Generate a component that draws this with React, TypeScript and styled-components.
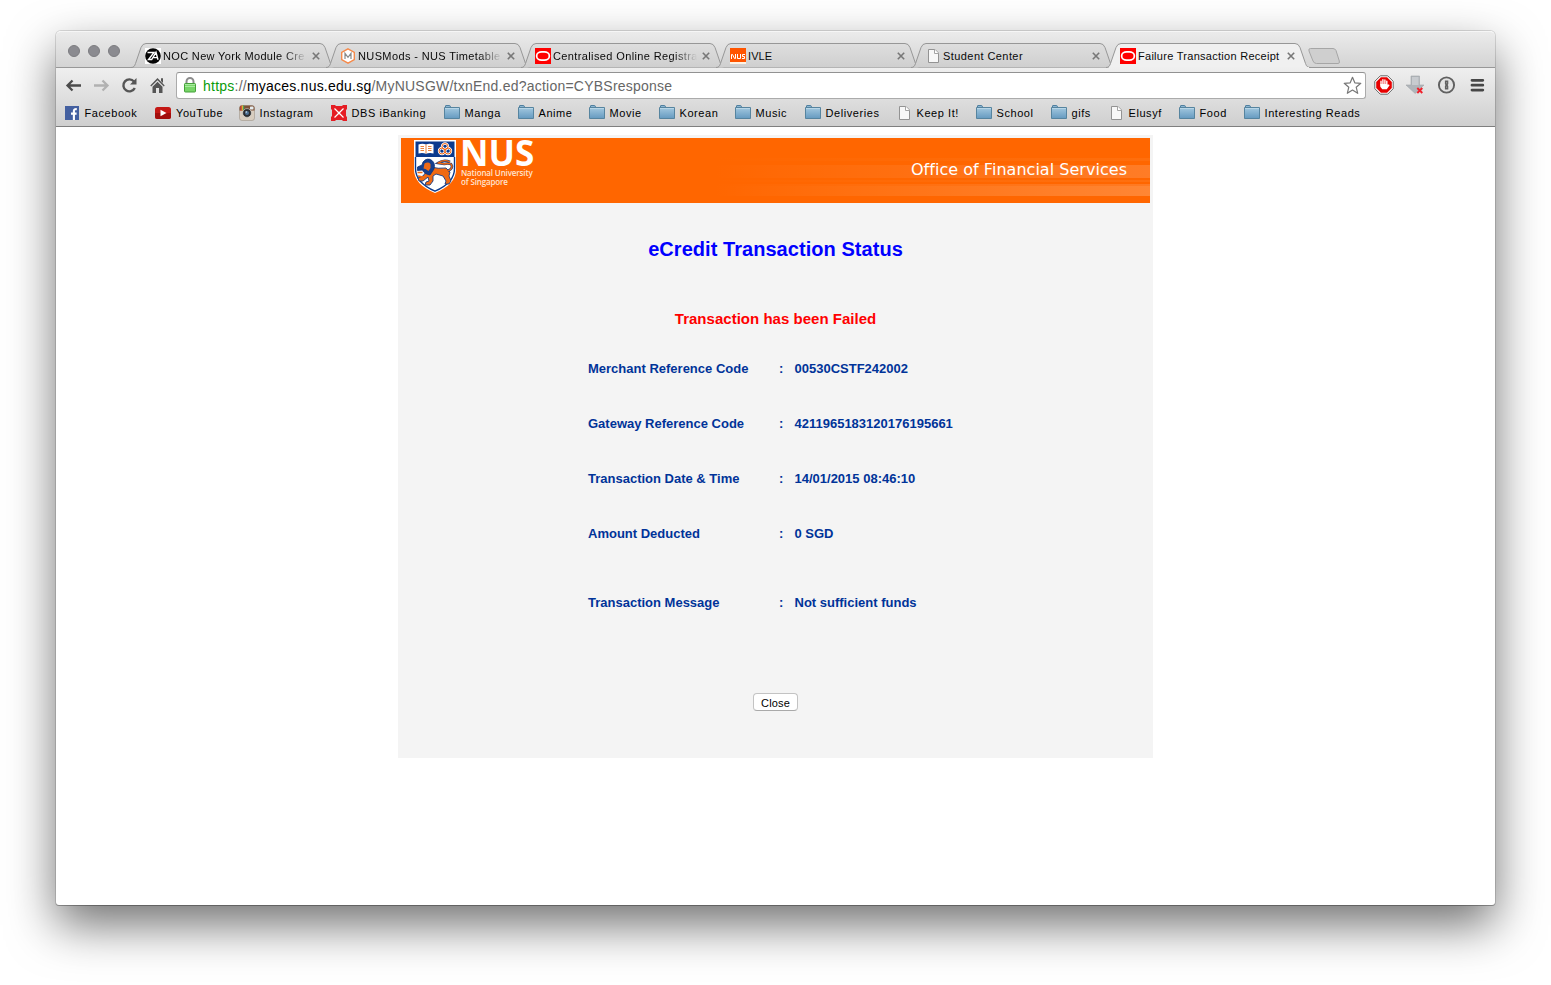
import React from "react";
import styled, { createGlobalStyle } from "styled-components";

const GlobalStyle = createGlobalStyle`
  * { box-sizing: border-box; }
  body { margin: 0; background: #fff; overflow: hidden; }
`;

const chromeFont = `"Liberation Sans", Arial, sans-serif`;

const Desktop = styled.div`
  width: 1551px;
  height: 985px;
  padding: 31px 0 0 56px;
  overflow: hidden;
  background: #fff;
`;

const BrowserWindow = styled.div`
  width: 1439px;
  height: 874px;
  display: flex;
  flex-direction: column;
  background: #fff;
  border-radius: 5px 5px 3px 3px;
  box-shadow: 0 0 0 1px rgba(0, 0, 0, 0.13), 0 1px 0 rgba(0, 0, 0, 0.2), 0 20px 48px rgba(0, 0, 0, 0.56);
  font-family: ${chromeFont};
`;

const TabStrip = styled.div`
  height: 37px;
  flex: none;
  display: flex;
  align-items: flex-end;
  border-radius: 5px 5px 0 0;
  border-top: 1px solid #f6f6f6;
  background: linear-gradient(#ebebeb, #d3d3d3);
  box-shadow: inset 0 -1px 0 #989898;
`;

const TrafficLights = styled.div`
  width: 75px;
  height: 36px;
  padding: 2px 0 0 12px;
  display: flex;
  align-items: center;
  gap: 8px;
`;

const Light = styled.span`
  width: 12px;
  height: 12px;
  border-radius: 50%;
  background: #8b8b90;
  border: 1px solid #7c7c80;
`;

const TabBox = styled.div`
  position: relative;
  width: 206px;
  height: 25px;
  margin-right: -11px;
  padding: 1px 0 0 14px;
  display: flex;
  align-items: center;
  flex: none;
`;

const TabShape = styled.svg`
  position: absolute;
  left: 0;
  top: 0;
`;

const Favicon = styled.svg`
  position: relative;
  flex: none;
`;

const TabTitle = styled.span<{ $spacing: number; $fade: boolean }>`
  position: relative;
  width: 144px;
  margin-left: 2px;
  overflow: hidden;
  white-space: nowrap;
  font-size: 11px;
  line-height: 16px;
  letter-spacing: ${(p) => p.$spacing}px;
  color: #0a0a0a;
  ${(p) => p.$fade && "mask-image: linear-gradient(90deg, #000 84%, transparent 100%);"}
`;

const CloseMark = styled.svg`
  position: relative;
  margin-left: 5px;
  flex: none;
`;

const NewTab = styled.svg`
  margin: 0 0 3px 6px;
  flex: none;
`;

const ToolArea = styled.div`
  height: 59px;
  flex: none;
  background: linear-gradient(#efefef, #cfcfcf);
  border-bottom: 1px solid #7f7f7f;
`;

const NavRow = styled.div`
  height: 34px;
  display: flex;
  align-items: center;
  padding: 0 0 0 7px;
`;

const NavIcon = styled.svg`
  width: 20px;
  height: 20px;
  margin-right: 8px;
  flex: none;
`;

const AddressBar = styled.div`
  width: 1190px;
  height: 27px;
  margin-left: 1px;
  display: flex;
  align-items: center;
  border: 1px solid #ababab;
  border-top-color: #929292;
  border-radius: 3px;
  background: #fff;
  padding: 0 3px 0 6px;
  flex: none;
`;

const Url = styled.div`
  flex: 1;
  margin-left: 6px;
  padding-top: 2px;
  font-size: 14px;
  line-height: 18px;
  letter-spacing: 0.23px;
  color: #666;
`;

const Secure = styled.span`
  color: #0a9b0a;
`;
const Host = styled.span`
  color: #000;
`;

const Extensions = styled.div`
  display: flex;
  align-items: center;
  gap: 11px;
  margin-left: 8px;
`;

const BookmarkBar = styled.div`
  height: 22px;
  display: flex;
  align-items: center;
  padding-left: 9px;
`;

const BookmarkItem = styled.div<{ $width: number }>`
  width: ${(p) => p.$width}px;
  flex: none;
  display: flex;
  align-items: center;
`;

const BookmarkLabel = styled.span<{ $gap: number }>`
  margin-left: ${(p) => p.$gap}px;
  font-size: 11px;
  line-height: 15px;
  letter-spacing: 0.57px;
  white-space: nowrap;
  color: #000;
`;

const Page = styled.main`
  flex: 1;
  display: flex;
  justify-content: center;
  align-items: flex-start;
  padding-top: 8px;
`;

const Receipt = styled.section`
  width: 755px;
  height: 623px;
  padding: 3px;
  background: #f4f4f4;
  display: flex;
  flex-direction: column;
  align-items: center;
`;

const Banner = styled.header`
  width: 749px;
  height: 65px;
  flex: none;
  display: flex;
  justify-content: space-between;
  background: linear-gradient(90deg, #f60 42%, rgba(255, 102, 0, 0) 100%),
    linear-gradient(#f60 0 20px, #ff6e0c 20px 23px, #f60 23px 27px, #ff7c26 27px 40px, #f60 40px 42px, #ff700f 42px 44px, #f60 44px 46px, #ff7a22 46px 48px, #ff8634 48px 58px, #f60 58px);
`;

const Brand = styled.div`
  display: flex;
  padding: 2px 0 0 12px;
`;

const BrandText = styled.div`
  margin-left: 3px;
  color: #fff;
  font-family: "Open Sans", "Noto Sans", sans-serif;
`;

const BrandName = styled.div`
  height: 28px;
  font-size: 35px;
  line-height: 26px;
  font-weight: 700;
`;

const BrandLine = styled.div`
  padding-left: 1px;
  font-size: 8px;
  line-height: 9px;
  letter-spacing: -0.15px;
  font-weight: 600;
  white-space: nowrap;
  color: #ffe3cf;
`;

const Department = styled.div`
  padding: 22px 23px 0 0;
  font: 16px/20px "DejaVu Sans", Verdana, sans-serif;
  letter-spacing: 0.03px;
  color: #fff;
  white-space: nowrap;
`;

const Title = styled.h1`
  margin: 34px 0 0;
  font-size: 20px;
  line-height: 24px;
  letter-spacing: 0.05px;
  color: #00f;
`;

const Failure = styled.p`
  margin: 48px 0 0;
  font-size: 15px;
  line-height: 20px;
  font-weight: 700;
  letter-spacing: 0.02px;
  color: #f00;
`;

const Details = styled.dl`
  width: 375px;
  margin: 12px 0 0;
  display: grid;
  grid-template-columns: 191px 15.5px 1fr;
  grid-template-rows: repeat(4, 55px) 83px;
  align-items: center;
  font-size: 13px;
  line-height: 16px;
  font-weight: 700;
  color: #039;
`;

const Term = styled.dt``;
const Value = styled.dd`
  margin: 0;
  white-space: nowrap;
`;

const CloseButton = styled.button`
  width: 45px;
  height: 18px;
  margin-top: 49px;
  padding: 2px 0 0;
  border: 1px solid #c3c3c3;
  border-bottom-color: #a9a9a9;
  border-radius: 4px;
  background: #fff;
  font: 11px/14px ${chromeFont};
  letter-spacing: 0.15px;
  color: #000;
`;

type IconKind = "noc" | "mods" | "oval" | "nus" | "page" | "folder" | "facebook" | "youtube" | "instagram" | "dbs";

const SiteIcon = ({ kind }: { kind: IconKind }) => (
  <Favicon width="16" height="16" viewBox="0 0 16 16">
    {kind === "noc" && (
      <>
        <rect width="16" height="16" fill="#fff" />
        <circle cx="8" cy="8" r="7.8" fill="#050505" />
        <path d="M2.500 4.500H9L3.500 11.500h3.200L11 4.300l2 7.500M8.600 9.600h3.200" fill="none" stroke="#fff" strokeWidth="1.400" />
      </>
    )}
    {kind === "mods" && (
      <>
        <path d="M8 .8 14.3 4.4v7.2L8 15.2 1.7 11.6V4.4z" fill="#fff" stroke="#f58a4b" strokeWidth="1.4" />
        <path d="M5 11V5.3l3 4 3-4V11" fill="none" stroke="#888" strokeWidth="1.2" />
      </>
    )}
    {kind === "oval" && (
      <>
        <rect width="16" height="16" fill="#f00" />
        <rect x="1.700" y="3.800" width="12.600" height="8.400" rx="5" ry="3.600" fill="#f00" stroke="#fff" strokeWidth="1.700" />
      </>
    )}
    {kind === "nus" && (
      <>
        <rect width="16" height="16" fill="#fff3e4" />
        <rect width="16" height="14" fill="#ff5500" />
        <path d="M1.500 11V6.500h1l2 4h1V6M7.500 6v4.500h3V6M15 6.500h-2.500v2h2v2H12" fill="none" stroke="#fff" />
      </>
    )}
    {kind === "page" && (
      <>
        <path d="M3.500 1.500h6.500l3.500 3.500v9.500h-10z" fill="#f8f8f8" stroke="#939393" />
        <path d="M9.500 1.500v4h4" fill="#fff" stroke="#a5a5a5" />
      </>
    )}
    {kind === "folder" && (
      <>
        <defs>
          <linearGradient id="folderFill" x1="0" y1="0" x2="0" y2="1">
            <stop offset="0" stopColor="#a3c8df" />
            <stop offset="1" stopColor="#659ac0" />
          </linearGradient>
        </defs>
        <path d="M1.500 3V1Q1.500.5 2 .5H5.500Q6 .5 6.300 1V3" fill="#8db7d3" stroke="#4f7f9f" />
        <path d="M.5 2.500h15v11H.5z" fill="url(#folderFill)" stroke="#56849f" />
        <path d="M1 3.500h14" stroke="#b8d6e8" />
      </>
    )}
    {kind === "facebook" && (
      <>
        <path d="M0 1h14v14H0z" fill="#4460a0" />
        <path d="M8.900 15V5.800q0-1.900 2.900-1.600M6 8.600h5.600" fill="none" stroke="#fff" strokeWidth="2.100" />
      </>
    )}
    {kind === "youtube" && (
      <>
        <rect y="2" width="16" height="12" rx="2.500" fill="#c41815" />
        <path d="M0 8h16v3.500a2.500 2.500 0 0 1-2.500 2.500h-11A2.500 2.500 0 0 1 0 11.500z" fill="#a30e0d" />
        <path d="M5.500 4.800 11.500 8l-6 3.200z" fill="#fff" />
      </>
    )}
    {kind === "instagram" && (
      <>
        <rect x=".5" y=".5" width="15" height="15" rx="2.500" fill="#d8cdbf" stroke="#a0958a" strokeWidth=".6" />
        <path d="M.5 5.500V3A2.500 2.500 0 0 1 3 .5h10A2.500 2.500 0 0 1 15.500 3v2.500z" fill="#7d5138" />
        <path d="M2 .7v5" stroke="#d83b34" strokeWidth="1.200" />
        <path d="M3.300.5v5" stroke="#e5bd38" strokeWidth="1.200" />
        <path d="M4.600.5v5" stroke="#519d59" strokeWidth="1.200" />
        <rect x="11" y="1.500" width="3.500" height="3" rx=".6" fill="#e5edf0" />
        <circle cx="8" cy="8" r="4.400" fill="#2c2e31" stroke="#e6e2dc" strokeWidth=".6" />
        <circle cx="8" cy="8" r="2" fill="#507398" />
        <circle cx="7.300" cy="7" r=".8" fill="#d5e5f1" />
      </>
    )}
    {kind === "dbs" && (
      <>
        <path d="M0 0h4l1 1h6l1-1h4v4l-1 1v6l1 1v4h-4l-1-1H5l-1 1H0v-4l1-1V5L0 4z" fill="#e51c23" />
        <path d="M3.500 3.500l9 9M12.500 3.500l-9 9" stroke="#fff" strokeWidth="1.200" />
        <circle cx="8" cy="8" r="1.200" fill="#fff" />
      </>
    )}
  </Favicon>
);

const tabs: { title: string; icon: IconKind; spacing: number; fade?: boolean }[] = [
  { title: "NOC New York Module Cre", icon: "noc", spacing: 0.34, fade: true },
  { title: "NUSMods - NUS Timetable", icon: "mods", spacing: 0.38, fade: true },
  { title: "Centralised Online Registra", icon: "oval", spacing: 0.38, fade: true },
  { title: "IVLE", icon: "nus", spacing: 0.1 },
  { title: "Student Center", icon: "page", spacing: 0.43 },
  { title: "Failure Transaction Receipt", icon: "oval", spacing: 0.28 },
];

const Tab = ({ title, icon, spacing, fade, active }: (typeof tabs)[number] & { active: boolean }) => (
  <TabBox>
    <TabShape width="206" height="25" viewBox="0 0 206 25">
      <defs>
        <linearGradient id="tabFill" x1="0" y1="0" x2="0" y2="1">
          <stop offset="0" stopColor="#dedede" />
          <stop offset="1" stopColor="#cfcfcf" />
        </linearGradient>
      </defs>
      <path
        d="M0 24.500C3 24.500 3.500 23 4.500 20.500L10 4.500Q11.500.5 15 .5H189Q192.500.5 194 4.500L199.500 20.500C200.500 23 201 24.500 205 24.500"
        fill={active ? "#f0f0f0" : "url(#tabFill)"}
        stroke="#979797"
      />
      {active && <path d="M3 24.500h200" stroke="#efefef" />}
    </TabShape>
    <SiteIcon kind={icon} />
    <TabTitle $spacing={spacing} $fade={!!fade}>
      {title}
    </TabTitle>
    <CloseMark width="8" height="8" viewBox="0 0 8 8">
      <path d="M.8.8l6.400 6.400M7.200.8.8 7.200" stroke="#777" strokeWidth="1.600" />
    </CloseMark>
  </TabBox>
);

const bookmarks: { label: string; icon: IconKind; width: number; gap: number }[] = [
  { label: "Facebook", icon: "facebook", width: 90, gap: 3.5 },
  { label: "YouTube", icon: "youtube", width: 84, gap: 5 },
  { label: "Instagram", icon: "instagram", width: 92, gap: 4.5 },
  { label: "DBS iBanking", icon: "dbs", width: 113, gap: 4.5 },
  { label: "Manga", icon: "folder", width: 74, gap: 4.5 },
  { label: "Anime", icon: "folder", width: 71, gap: 4.5 },
  { label: "Movie", icon: "folder", width: 70, gap: 4.5 },
  { label: "Korean", icon: "folder", width: 76, gap: 4.5 },
  { label: "Music", icon: "folder", width: 70, gap: 4.5 },
  { label: "Deliveries", icon: "folder", width: 91, gap: 4.5 },
  { label: "Keep It!", icon: "page", width: 80, gap: 4.5 },
  { label: "School", icon: "folder", width: 75, gap: 4.5 },
  { label: "gifs", icon: "folder", width: 57, gap: 4.5 },
  { label: "Elusyf", icon: "page", width: 71, gap: 4.5 },
  { label: "Food", icon: "folder", width: 65, gap: 4.5 },
  { label: "Interesting Reads", icon: "folder", width: 130, gap: 4.5 },
];

const details = [
  ["Merchant Reference Code", "00530CSTF242002"],
  ["Gateway Reference Code", "4211965183120176195661"],
  ["Transaction Date & Time", "14/01/2015 08:46:10"],
  ["Amount Deducted", "0 SGD"],
  ["Transaction Message", "Not sufficient funds"],
];

const Crest = () => (
  <svg width="44" height="53" viewBox="0 0 44 53">
    <path d="M1 0h42v29c0 11-7 18-21 24C8 47 1 40 1 29z" fill="#fff" />
    <path d="M2.500 1.500h39v15.500h-39z" fill="#0b3a8d" />
    <path d="M2.500 17v11.500C2.500 38.500 9 45.500 22 51.200 35 45.500 41.500 38.500 41.500 28.500V17" fill="none" stroke="#0b3a8d" strokeWidth="1.400" />
    <path d="M5.500 4.500Q9.500 3.200 13 4.500 16.500 3.200 20.500 4.500V13.500Q16.500 12.200 13 13.800 9.500 12.200 5.500 13.500z" fill="#fff" />
    <path d="M13 4.500V13.500M7.500 6.500h3.500M7.500 8.500h3.500M7.500 10.500h3.500M15 6.500h3.500M15 8.500h3.500M15 10.500h3.500" stroke="#e8823d" />
    <g fill="none" stroke="#fff" strokeWidth="2.400">
      <circle cx="32" cy="6.500" r="3" />
      <circle cx="29" cy="11" r="3" />
      <circle cx="35" cy="11" r="3" />
    </g>
    <g fill="none" stroke="#ef6a1c" strokeWidth="1">
      <circle cx="32" cy="6.500" r="3" />
      <circle cx="29" cy="11" r="3" />
      <circle cx="35" cy="11" r="3" />
    </g>
    <path d="M18 27q7 2 15 1l4 4-1 4 2 5-2 3h-4l1-3-3-5-7-2-3 2 0 5-3 4h-5l1-3 3-1-1-4-5 4-4 0-1-3 5-2 3-4z" fill="#f16a12" stroke="#173d83" strokeWidth=".9" />
    <path d="M10 22q4-5 9-1.500 3.500 3 2 8.500l-4 6q-6-1-7.500-5l-5 .5V27l4.500-2z" fill="#153f8e" stroke="#0b3179" strokeWidth=".8" />
    <path d="M11.500 23.500q4-2 6 .5v4l-2 3-3-2-2-.5z" fill="#ee6a17" />
    <path d="M35 31q6-3 3-7-3-1-7 0l-6-1q6-4 12-1" fill="none" stroke="#173d83" strokeWidth="2.600" />
    <path d="M35 31q6-3 3-7-3-1-7 0l-6-1q6-4 12-1" fill="none" stroke="#f16a12" strokeWidth="1.300" />
    <path d="M4.500 32.500h5M5 36l5 1" stroke="#f16a12" strokeWidth="1.600" />
  </svg>
);

const Lock = () => (
  <svg width="14" height="16" viewBox="0 0 14 16">
    <path d="M3.500 8V4.500a3.500 3.500 0 0 1 7 0V8" fill="none" stroke="#8c8c8c" strokeWidth="2" />
    <rect x="1.500" y="6.500" width="11" height="8.500" rx=".8" fill="#78d568" stroke="#43a038" />
    <path d="M2 7.500h10M2 9.500h10" stroke="#a9eba0" />
  </svg>
);

export default function App() {
  return (
    <Desktop>
      <GlobalStyle />
      <BrowserWindow>
        <TabStrip>
          <TrafficLights>
            <Light />
            <Light />
            <Light />
          </TrafficLights>
          {tabs.map((tab, i) => (
            <Tab key={tab.title} {...tab} active={i === tabs.length - 1} />
          ))}
          <NewTab width="34" height="17" viewBox="0 0 34 17">
            <path d="M3.500.5H26Q28 .5 29 2.500L32.300 13Q33 15.500 31 15.500H9.500Q7 15.500 6 13L2 3Q1.200.5 3.500.5z" fill="#cfcfcf" stroke="#a6a6a6" />
          </NewTab>
        </TabStrip>
        <ToolArea>
          <NavRow>
            <NavIcon viewBox="0 0 20 20" fill="none" stroke="#4b4b4b">
              <path d="M18 10.500H4.500M9.500 5.500l-5 5 5 5" strokeWidth="2.300" />
            </NavIcon>
            <NavIcon viewBox="0 0 20 20" fill="none" stroke="#b1b1b1">
              <path d="M3 10.500h13.500M11.500 5.500l5 5-5 5" strokeWidth="2.300" />
            </NavIcon>
            <NavIcon viewBox="0 0 20 20" fill="none" stroke="#555">
              <path d="M15 6.500A6 6 0 1 0 15.800 13" strokeWidth="2.400" />
              <path d="M17.500 3v6.500H11z" fill="#555" stroke="none" />
            </NavIcon>
            <NavIcon viewBox="0 0 20 20" fill="#555">
              <path d="M10.500 3 17.700 10.500 16.800 11.500 10.500 5.200 4.200 11.500 3.300 10.500zM14 3.200h2v4.800L14 6z" />
              <path d="M10.500 6.700 15.500 11.700v6.300h-3.500V13H9v5H5.500v-6.300z" />
            </NavIcon>
            <AddressBar>
              <Lock />
              <Url>
                <Secure>https</Secure>://<Host>myaces.nus.edu.sg</Host>/MyNUSGW/txnEnd.ed?action=CYBSresponse
              </Url>
              <svg width="19" height="19" viewBox="0 0 19 19">
                <path d="M9.500 1.300 11.800 6.800 17.800 7.300 13.200 11.200 14.700 17.300 9.500 14 4.300 17.300 5.800 11.200 1.200 7.300 7.200 6.800z" fill="#fff" stroke="#777" strokeWidth="1.200" strokeLinejoin="round" />
              </svg>
            </AddressBar>
            <Extensions>
              <svg width="20" height="20" viewBox="0 0 20 20">
                <path d="M6.300.8h7.400l5.500 5.500v7.400l-5.500 5.500H6.300L.8 13.700V6.300z" fill="#fff" stroke="#666" />
                <path d="M6.900 2.200h6.200l4.700 4.700v6.200l-4.700 4.700H6.900l-4.700-4.700V6.900z" fill="#e70000" />
                <path d="M7 10V6.300M8.900 9V4.800M10.900 9V5M12.800 10V6.200" stroke="#fff" strokeWidth="1.400" strokeLinecap="round" />
                <path d="M6.300 9h7.200v1.300l1.300-1 .8 1-2.800 4H8.300l-2-2.500z" fill="#fff" />
              </svg>
              <svg width="20" height="20" viewBox="0 0 20 20">
                <path d="M6 1h8.500v9H19L10.200 18.500 1 10h5z" fill="#b0b5ba" stroke="#a1a5aa" strokeWidth=".6" />
                <path d="M7 2h6.500v8H7z" fill="#c8cbcf" />
                <path d="M12.300 13l5 5M17.300 13l-5 5" stroke="#f0202b" strokeWidth="1.900" />
              </svg>
              <svg width="20" height="20" viewBox="0 0 20 20">
                <circle cx="10.500" cy="10" r="7.600" fill="#e3e3e3" stroke="#606060" strokeWidth="1.900" />
                <path d="M8.900 5.500h3.400v3.600l-.6.900.6.900v3.700H8.900V11l.6-1-.6-.9z" fill="#606060" />
                <path d="M10.600 7v1.500M10.600 11.500V13" stroke="#aaa" strokeWidth=".7" />
              </svg>
              <svg width="20" height="20" viewBox="0 0 20 20">
                <path d="M5 5.300h10.800M5 10.200h10.800M5 15.100h10.800" stroke="#464646" strokeWidth="2.800" strokeLinecap="round" />
              </svg>
            </Extensions>
          </NavRow>
          <BookmarkBar>
            {bookmarks.map((b) => (
              <BookmarkItem key={b.label} $width={b.width}>
                <SiteIcon kind={b.icon} />
                <BookmarkLabel $gap={b.gap}>{b.label}</BookmarkLabel>
              </BookmarkItem>
            ))}
          </BookmarkBar>
        </ToolArea>
        <Page>
          <Receipt>
            <Banner>
              <Brand>
                <Crest />
                <BrandText>
                  <BrandName>NUS</BrandName>
                  <BrandLine>National University</BrandLine>
                  <BrandLine>of Singapore</BrandLine>
                </BrandText>
              </Brand>
              <Department>Office of Financial Services</Department>
            </Banner>
            <Title>eCredit Transaction Status</Title>
            <Failure>Transaction has been Failed</Failure>
            <Details>
              {details.map(([term, value]) => (
                <React.Fragment key={term}>
                  <Term>{term}</Term>
                  <span>:</span>
                  <Value>{value}</Value>
                </React.Fragment>
              ))}
            </Details>
            <CloseButton>Close</CloseButton>
          </Receipt>
        </Page>
      </BrowserWindow>
    </Desktop>
  );
}
